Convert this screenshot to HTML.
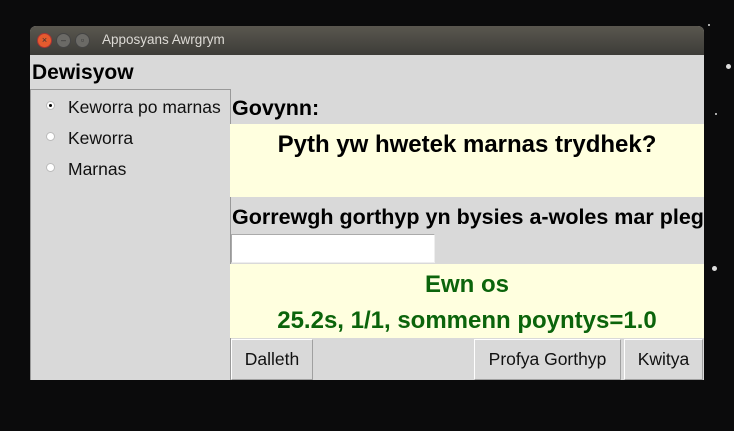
<!DOCTYPE html>
<html><head><style>
*{margin:0;padding:0;box-sizing:border-box}
body{width:734px;height:431px;background:#0b0b0c;position:relative;overflow:hidden;font-family:"Liberation Sans",sans-serif}
.a{position:absolute}
.star{position:absolute;background:#ddd;border-radius:50%}
.win{left:30px;top:26px;width:674px;height:354px;background:#d9d9d9;border-radius:6px 6px 0 0;overflow:hidden}
.tb{left:0;top:0;width:674px;height:29px;background:linear-gradient(#5a574f,#3d3c38)}
.tt{left:72px;top:6px;color:#dcdad5;font-size:13.5px}
.btn{position:absolute;top:7px;width:15px;height:15px;border-radius:50%;background:#6b6a66;border:1px solid #444;color:#333;font-size:9px;text-align:center;line-height:13px}
.b{font-weight:bold;color:#000}
.y{background:#ffffdf}
.pb{position:absolute;top:313px;height:41px;background:#d9d9d9;border:1px solid #a0a0a0;border-top-color:#fff;border-left-color:#fff;font-size:17.5px;text-align:center;line-height:39px;color:#111}
.r{position:absolute;left:16px;width:9px;height:9px;border-radius:50%;background:#fff;border:1px solid #bbb}
.rl{position:absolute;left:38px;font-size:17.5px;color:#111}
</style></head><body>
<div class="star" style="left:726px;top:64px;width:5px;height:5px"></div>
<div class="star" style="left:712px;top:266px;width:5px;height:5px"></div>
<div class="star" style="left:708px;top:24px;width:2px;height:2px"></div>
<div class="star" style="left:715px;top:113px;width:2px;height:2px"></div>
<div class="a win">
<div class="a tb"></div>
<div class="btn" style="left:7px;background:#e55b2e;border-color:#a33">×</div>
<div class="btn" style="left:26px">–</div>
<div class="btn" style="left:45px">▫</div>
<div class="a tt">Apposyans Awrgrym</div>
<div class="a b" style="left:2px;top:35px;font-size:21px">Dewisyow</div>
<div class="a" style="left:0;top:63px;width:201px;height:291px;border:1px solid #999;border-bottom:none"></div>
<div class="r" style="top:75px"><div style="position:absolute;left:2px;top:2px;width:3px;height:3px;background:#000;border-radius:50%"></div></div>
<div class="rl" style="top:71px">Keworra po marnas</div>
<div class="r" style="top:106px"></div>
<div class="rl" style="top:102px">Keworra</div>
<div class="r" style="top:137px"></div>
<div class="rl" style="top:133px">Marnas</div>
<div class="a b" style="left:202px;top:70px;font-size:21.5px">Govynn:</div>
<div class="a y" style="left:200px;top:98px;width:474px;height:73px"></div>
<div class="a b" style="left:200px;top:105px;width:474px;text-align:center;font-size:24px;white-space:nowrap">Pyth yw hwetek marnas trydhek?</div>
<div class="a b" style="left:202px;top:179px;font-size:21.5px;white-space:nowrap">Gorrewgh gorthyp yn bysies a-woles mar pleg</div>
<div class="a" style="left:201px;top:208px;width:204px;height:29px;background:#fff;border:1px solid #aaa;border-right-color:#eee;border-bottom-color:#eee"></div>
<div class="a y" style="left:200px;top:238px;width:474px;height:74px"></div>
<div class="a" style="left:200px;top:245px;width:474px;text-align:center;font-size:24px;font-weight:bold;color:#0b640b">Ewn os</div>
<div class="a" style="left:200px;top:281px;width:474px;text-align:center;font-size:24px;font-weight:bold;color:#0b640b;white-space:nowrap">25.2s, 1/1, sommenn poyntys=1.0</div>
<div class="pb" style="left:201px;width:82px">Dalleth</div>
<div class="pb" style="left:444px;width:147px">Profya Gorthyp</div>
<div class="pb" style="left:594px;width:79px">Kwitya</div>
</div>
</body></html>
